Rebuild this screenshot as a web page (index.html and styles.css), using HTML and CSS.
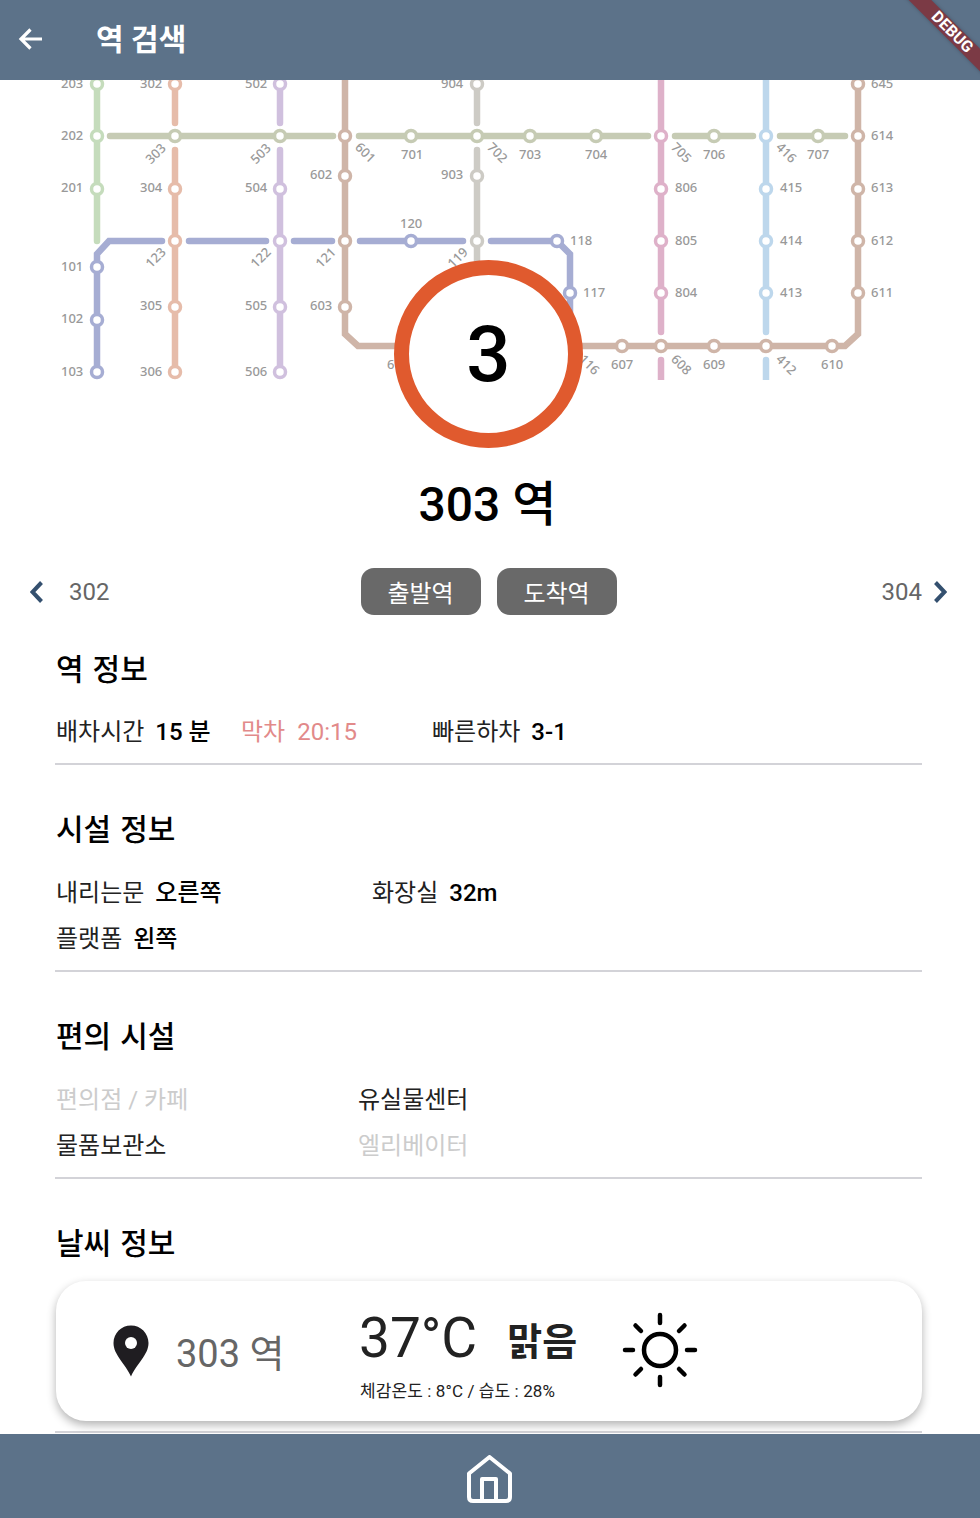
FILE: index.html
```html
<!DOCTYPE html>
<html lang="ko">
<head>
    <meta charset="UTF-8">
    <meta name="viewport" content="width=device-width, initial-scale=1.0">
    <title>역 검색</title>
    <link rel="stylesheet" href="styles.css">
</head>
<body>

<div class="app">
    <header class="topbar">
        <svg class="back-icon" width="26" height="24" viewBox="0 0 26 24">
            <path d="M24 12H3M12.500 2.500L3 12l9.500 9.500"/>
        </svg>
        <h1 class="topbar-title">역 검색</h1>
        <div class="debug-banner">DEBUG</div>
    </header>

    <main class="content">
        <section class="map-area">
            <svg class="map" width="980" height="300" viewBox="0 80 980 300">
                <!-- lines -->
                <g class="lines">
                    <path class="l2" d="M97 70V241"/>
                    <path class="l3" d="M175 70V123M175 150V372"/>
                    <path class="l5" d="M280 70V123M280 150V372"/>
                    <path class="l9" d="M477 70V123M477 150V270"/>
                    <path class="l8" d="M661 70V332M661 360V390"/>
                    <path class="l4" d="M766 70V332M766 360V390"/>
                    <path class="l6" d="M345 70V334L358 346H400M575 346H845L858 334V70"/>
                    <path class="l7" d="M110 136H333M359 136H648M675 136H753M780 136H845"/>
                    <path class="l1" d="M97 372V254L109 241H162M189 241H266M294 241H332M360 241H463M491 241H557L570 254V320"/>
                </g>
                <!-- stations -->
                <g class="stops s2"><circle cx="97" cy="84" r="5.500"/><circle cx="97" cy="136" r="5.500"/><circle cx="97" cy="189" r="5.500"/></g>
                <g class="stops s1"><circle cx="97" cy="267" r="5.500"/><circle cx="97" cy="320" r="5.500"/><circle cx="97" cy="372" r="5.500"/><circle cx="411" cy="241" r="5.500"/><circle cx="557" cy="241" r="5.500"/><circle cx="570" cy="293" r="5.500"/></g>
                <g class="stops s3"><circle cx="175" cy="84" r="5.500"/><circle cx="175" cy="189" r="5.500"/><circle cx="175" cy="241" r="5.500"/><circle cx="175" cy="307" r="5.500"/><circle cx="175" cy="372" r="5.500"/></g>
                <g class="stops s5"><circle cx="280" cy="84" r="5.500"/><circle cx="280" cy="189" r="5.500"/><circle cx="280" cy="241" r="5.500"/><circle cx="280" cy="307" r="5.500"/><circle cx="280" cy="372" r="5.500"/></g>
                <g class="stops s7"><circle cx="175" cy="136" r="5.500"/><circle cx="280" cy="136" r="5.500"/><circle cx="411" cy="136" r="5.500"/><circle cx="477" cy="136" r="5.500"/><circle cx="530" cy="136" r="5.500"/><circle cx="596" cy="136" r="5.500"/><circle cx="714" cy="136" r="5.500"/><circle cx="818" cy="136" r="5.500"/></g>
                <g class="stops s6"><circle cx="345" cy="136" r="5.500"/><circle cx="345" cy="176" r="5.500"/><circle cx="345" cy="241" r="5.500"/><circle cx="345" cy="307" r="5.500"/><circle cx="622" cy="346" r="5.500"/><circle cx="661" cy="346" r="5.500"/><circle cx="714" cy="346" r="5.500"/><circle cx="766" cy="346" r="5.500"/><circle cx="832" cy="346" r="5.500"/><circle cx="858" cy="84" r="5.500"/><circle cx="858" cy="136" r="5.500"/><circle cx="858" cy="189" r="5.500"/><circle cx="858" cy="241" r="5.500"/><circle cx="858" cy="293" r="5.500"/></g>
                <g class="stops s9"><circle cx="477" cy="84" r="5.500"/><circle cx="477" cy="176" r="5.500"/><circle cx="477" cy="241" r="5.500"/></g>
                <g class="stops s8"><circle cx="661" cy="136" r="5.500"/><circle cx="661" cy="189" r="5.500"/><circle cx="661" cy="241" r="5.500"/><circle cx="661" cy="293" r="5.500"/></g>
                <g class="stops s4"><circle cx="766" cy="136" r="5.500"/><circle cx="766" cy="189" r="5.500"/><circle cx="766" cy="241" r="5.500"/><circle cx="766" cy="293" r="5.500"/></g>
                <!-- labels -->
                <g class="labels">
                    <text x="61" y="88">203</text><text x="61" y="140">202</text><text x="61" y="192">201</text>
                    <text x="61" y="271">101</text><text x="61" y="323">102</text><text x="61" y="376">103</text>
                    <text x="140" y="88">302</text><text x="140" y="192">304</text><text x="140" y="310">305</text><text x="140" y="376">306</text>
                    <text x="245" y="88">502</text><text x="245" y="192">504</text><text x="245" y="310">505</text><text x="245" y="376">506</text>
                    <text x="310" y="179">602</text><text x="310" y="310">603</text><text x="387" y="369">6</text>
                    <text x="441" y="88">904</text><text x="441" y="179">903</text>
                    <text x="401" y="159">701</text><text x="400" y="228">120</text>
                    <text x="519" y="159">703</text><text x="585" y="159">704</text>
                    <text x="570" y="245">118</text><text x="583" y="297">117</text>
                    <text x="675" y="192">806</text><text x="675" y="245">805</text><text x="675" y="297">804</text>
                    <text x="703" y="159">706</text><text x="807" y="159">707</text>
                    <text x="780" y="192">415</text><text x="780" y="245">414</text><text x="780" y="297">413</text>
                    <text x="871" y="88">645</text><text x="871" y="140">614</text><text x="871" y="192">613</text><text x="871" y="245">612</text><text x="871" y="297">611</text>
                    <text x="611" y="369">607</text><text x="703" y="369">609</text><text x="821" y="369">610</text>
                    <text transform="translate(156 154) rotate(-45)" text-anchor="middle" y="4">303</text>
                    <text transform="translate(261 154) rotate(-45)" text-anchor="middle" y="4">503</text>
                    <text transform="translate(156 258) rotate(-45)" text-anchor="middle" y="4">123</text>
                    <text transform="translate(261 258) rotate(-45)" text-anchor="middle" y="4">122</text>
                    <text transform="translate(326 258) rotate(-45)" text-anchor="middle" y="4">121</text>
                    <text transform="translate(458 258) rotate(-45)" text-anchor="middle" y="4">119</text>
                    <text transform="translate(365 153) rotate(45)" text-anchor="middle" y="4">601</text>
                    <text transform="translate(497 153) rotate(45)" text-anchor="middle" y="4">702</text>
                    <text transform="translate(681 153) rotate(45)" text-anchor="middle" y="4">705</text>
                    <text transform="translate(786 153) rotate(45)" text-anchor="middle" y="4">416</text>
                    <text transform="translate(589 365) rotate(45)" text-anchor="middle" y="4">116</text>
                    <text transform="translate(681 365) rotate(45)" text-anchor="middle" y="4">608</text>
                    <text transform="translate(786 365) rotate(45)" text-anchor="middle" y="4">412</text>
                </g>
            </svg>
            <div class="station-badge">3</div>
        </section>

        <h2 class="station-name">303 역</h2>

        <div class="station-nav">
            <div class="nav-side">
                <svg class="chevron" width="14" height="24" viewBox="0 0 14 24"><path d="M11.500 2.500L2.500 12l9 9.500"/></svg>
                <span class="nav-label">302</span>
            </div>
            <div class="nav-buttons">
                <button class="pill">출발역</button>
                <button class="pill">도착역</button>
            </div>
            <div class="nav-side">
                <span class="nav-label">304</span>
                <svg class="chevron" width="14" height="24" viewBox="0 0 14 24"><path d="M2.500 2.500l9 9.500-9 9.500"/></svg>
            </div>
        </div>

        <section class="info info-station">
            <h3>역 정보</h3>
            <div class="grid cols-station">
                <div class="item">배차시간<b>15 분</b></div>
                <div class="item item-last">막차<span>20:15</span></div>
                <div class="item">빠른하차<b>3-1</b></div>
            </div>
        </section>

        <section class="info">
            <h3>시설 정보</h3>
            <div class="grid cols-facility">
                <div class="item">내리는문<b>오른쪽</b></div>
                <div class="item">화장실<b>32m</b></div>
                <div class="item">플랫폼<b>왼쪽</b></div>
            </div>
        </section>

        <section class="info">
            <h3>편의 시설</h3>
            <div class="grid cols-amenity">
                <div class="item off">편의점 / 카페</div>
                <div class="item">유실물센터</div>
                <div class="item">물품보관소</div>
                <div class="item off">엘리베이터</div>
            </div>
        </section>

        <section class="info info-weather">
            <h3>날씨 정보</h3>
            <div class="weather-card">
                <svg class="pin" width="36" height="52" viewBox="0 0 36 52">
                    <path d="M18 0.500C8.300 0.500 0.500 8.300 0.500 18C0.500 30 12 38 18 51.500C24 38 35.500 30 35.500 18C35.500 8.300 27.700 0.500 18 0.500Z"/>
                    <circle cx="18" cy="18" r="6"/>
                </svg>
                <div class="weather-place">303 역</div>
                <div class="weather-main">
                    <div class="weather-now">
                        <span class="temp">37°C</span>
                        <span class="sky">맑음</span>
                    </div>
                    <div class="weather-sub">체감온도 : 8°C / 습도 : 28%</div>
                </div>
                <svg class="sun" width="76" height="76" viewBox="0 0 76 76">
                    <circle cx="38" cy="38" r="16"/>
                    <path d="M38 3V11M38 65V73M3 38H11M65 38H73M13.500 13.500L19 19M57 57L62.500 62.500M13.500 62.500L19 57M57 19L62.500 13.500"/>
                </svg>
            </div>
        </section>
    </main>

    <footer class="bottombar">
        <svg class="home-icon" width="45" height="48" viewBox="0 0 45 48">
            <path d="M22.500 2L43 18.500V42Q43 46 39 46H6Q2 46 2 42V18.500Z"/>
            <path d="M15 46V24H29V46"/>
        </svg>
    </footer>
</div>

</body>
</html>
```

FILE: styles.css
```css
* {
    box-sizing: border-box;
}

body {
    margin: 0;
    background-color: #fff;
    color: #000;
    font-family: Roboto, "Noto Sans CJK KR", sans-serif;
}

.app {
    width: 980px;
    height: 1518px;
    display: flex;
    flex-direction: column;
    overflow: hidden;
}

/* top bar */
.topbar {
    position: relative;
    flex: none;
    height: 80px;
    display: flex;
    align-items: center;
    padding-left: 18px;
    padding-bottom: 3px;
    background-color: #5c7289;
    overflow: hidden;
    z-index: 2;
}

.back-icon path {
    fill: none;
    stroke: #fff;
    stroke-width: 3.200;
}

.topbar-title {
    margin: 0 0 4px 52px;
    font-size: 30px;
    font-weight: 700;
    color: #fff;
}

.debug-banner {
    position: absolute;
    top: 22px;
    left: 890px;
    width: 120px;
    height: 16px;
    padding-left: 6px;
    line-height: 16px;
    text-align: center;
    transform: rotate(45deg);
    background-color: #7b3a45;
    box-shadow: 0 0 4px rgba(0, 0, 0, 0.25);
    color: #fff;
    font-size: 16px;
    font-weight: 700;
    font-family: Roboto, sans-serif;
}

/* main */
.content {
    flex: 1;
    min-height: 0;
    overflow: hidden;
}

.map-area {
    position: relative;
    height: 380px;
}

.map {
    display: block;
}

.lines path {
    fill: none;
    stroke-width: 6.500;
    stroke-linecap: round;
    stroke-linejoin: miter;
}

.l1 { stroke: #a6add3; }
.l2 { stroke: #c5dcbc; }
.l3 { stroke: #e6bcaa; }
.l4 { stroke: #bdd7ec; }
.l5 { stroke: #d0c0de; }
.l6 { stroke: #cfb5a8; }
.l7 { stroke: #c6cbb4; }
.l8 { stroke: #deb1c9; }
.l9 { stroke: #cdcbc5; }

.stops circle {
    fill: #fff;
    stroke-width: 3.500;
}

.s1 circle { stroke: #a6add3; }
.s2 circle { stroke: #c5dcbc; }
.s3 circle { stroke: #e6bcaa; }
.s4 circle { stroke: #bdd7ec; }
.s5 circle { stroke: #d0c0de; }
.s6 circle { stroke: #cfb5a8; }
.s7 circle { stroke: #c6cbb4; }
.s8 circle { stroke: #deb1c9; }
.s9 circle { stroke: #cdcbc5; }

.labels text {
    fill: #999;
    font-family: "Noto Sans", sans-serif;
    font-size: 13px;
    font-weight: 500;
}

.station-badge {
    position: absolute;
    top: 180px;
    left: 394px;
    width: 189px;
    height: 188px;
    display: flex;
    align-items: center;
    justify-content: center;
    border: 15px solid #e05a2e;
    border-radius: 50%;
    background-color: #fff;
    font-size: 78px;
    font-weight: 500;
}

.station-name {
    margin: 22px 0 0;
    padding-right: 5px;
    height: 46px;
    line-height: 46px;
    text-align: center;
    font-size: 48px;
    font-weight: 500;
}

.station-nav {
    display: flex;
    align-items: center;
    justify-content: space-between;
    height: 47px;
    margin-top: 40px;
    padding: 0 33px 0 30px;
}

.nav-side {
    display: flex;
    align-items: center;
    width: 100px;
    gap: 25px;
}

.nav-side:last-child {
    justify-content: flex-end;
    gap: 11px;
}

.chevron path {
    fill: none;
    stroke: #34506f;
    stroke-width: 4;
}

.nav-label {
    font-size: 24px;
    color: #666;
}

.nav-buttons {
    display: flex;
    gap: 16px;
}

.pill {
    width: 120px;
    height: 47px;
    padding: 0;
    border: none;
    border-radius: 13px;
    background-color: #696969;
    color: #fff;
    font-family: inherit;
    font-size: 24px;
}

/* info sections */
.info {
    height: 207px;
    margin: 0 58px 0 55px;
    padding: 47px 0 0 1px;
    border-bottom: 2px solid #d3d3d8;
}

.info-station {
    height: 134px;
    margin-top: 16px;
    padding-top: 21px;
}

.info h3 {
    margin: 0;
    height: 36px;
    line-height: 36px;
    font-size: 30px;
    font-weight: 500;
    word-spacing: 1.500px;
}

.grid {
    display: grid;
    row-gap: 10px;
    margin-top: 27px;
}

.cols-station { grid-template-columns: 185px 191px 1fr; margin-top: 26px; }
.cols-facility { grid-template-columns: 316px 1fr; }
.cols-amenity { grid-template-columns: 302px 1fr; }

.item {
    height: 36px;
    line-height: 36px;
    font-size: 24px;
    color: #222;
}

.item b {
    margin-left: 11px;
    font-weight: 500;
    color: #000;
}

.item-last {
    color: #e28a8a;
}

.item-last span {
    margin-left: 12px;
}

.off {
    color: #ccc;
}

.info-weather {
    height: 254px;
}

.weather-card {
    display: flex;
    align-items: center;
    height: 140px;
    margin-top: 19px;
    padding-left: 57px;
    border-radius: 30px;
    background-color: #fff;
    box-shadow: 0 4px 10px rgba(0, 0, 0, 0.3);
}

.pin {
    flex: none;
}

.pin path { fill: #1f1d21; }
.pin circle { fill: #fff; }

.weather-place {
    width: 184px;
    margin-left: 27px;
    margin-top: -2px;
    font-size: 38px;
    color: #666;
}

.weather-main {
    width: 254px;
    margin-top: 10px;
}

.weather-now {
    display: flex;
    align-items: center;
    gap: 30px;
    height: 56px;
}

.temp {
    margin-left: -1px;
    font-size: 55px;
    color: #222;
}

.sky {
    font-size: 38px;
    font-weight: 700;
    color: #222;
}

.weather-sub {
    margin-top: 11px;
    font-size: 17px;
    letter-spacing: 0.100px;
    color: #222;
}

.sun {
    flex: none;
    margin-left: 8px;
    margin-top: -2px;
}

.sun circle,
.sun path {
    fill: none;
    stroke: #000;
    stroke-width: 4.500;
    stroke-linecap: round;
}

/* bottom bar */
.bottombar {
    flex: none;
    height: 84px;
    display: flex;
    align-items: center;
    justify-content: center;
    padding-top: 6px;
    padding-right: 1px;
    background-color: #5c7289;
}

.home-icon path {
    fill: none;
    stroke: #fff;
    stroke-width: 4;
    stroke-linejoin: round;
}
```
